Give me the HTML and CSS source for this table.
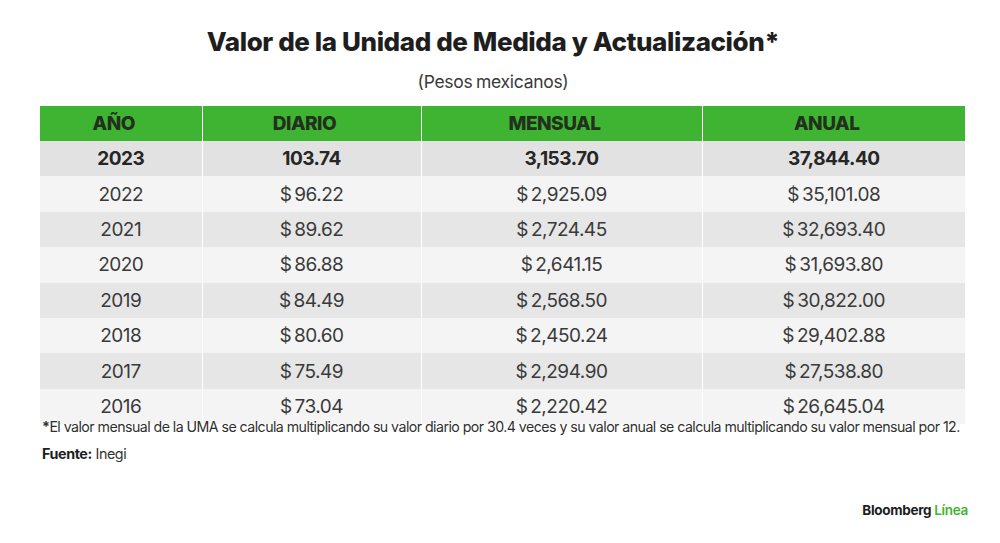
FILE: index.html
```html
<!DOCTYPE html>
<html lang="es">
<head>
<meta charset="utf-8">
<title>UMA</title>
<link rel="stylesheet" href="styles.css">
</head>
<body>
<div class="page">
  <h1 class="title">Valor de la Unidad de Medida y Actualización*</h1>
  <p class="subtitle">(Pesos mexicanos)</p>
  <table class="uma">
    <colgroup>
      <col class="c1"><col class="c2"><col class="c3"><col class="c4">
    </colgroup>
    <thead>
      <tr><th>AÑO</th><th>DIARIO</th><th>MENSUAL</th><th>ANUAL</th></tr>
    </thead>
    <tbody>
      <tr class="cur"><td>2023</td><td>103.74</td><td>3,153.70</td><td>37,844.40</td></tr>
      <tr><td>2022</td><td>$&#8201;96.22</td><td>$&#8201;2,925.09</td><td>$&#8201;35,101.08</td></tr>
      <tr><td>2021</td><td>$&#8201;89.62</td><td>$&#8201;2,724.45</td><td>$&#8201;32,693.40</td></tr>
      <tr><td>2020</td><td>$&#8201;86.88</td><td>$&#8201;2,641.15</td><td>$&#8201;31,693.80</td></tr>
      <tr><td>2019</td><td>$&#8201;84.49</td><td>$&#8201;2,568.50</td><td>$&#8201;30,822.00</td></tr>
      <tr><td>2018</td><td>$&#8201;80.60</td><td>$&#8201;2,450.24</td><td>$&#8201;29,402.88</td></tr>
      <tr><td>2017</td><td>$&#8201;75.49</td><td>$&#8201;2,294.90</td><td>$&#8201;27,538.80</td></tr>
      <tr><td>2016</td><td>$&#8201;73.04</td><td>$&#8201;2,220.42</td><td>$&#8201;26,645.04</td></tr>
    </tbody>
  </table>
  <p class="note"><b>*</b>El valor mensual de la UMA se calcula multiplicando su valor diario por 30.4 veces y su valor anual se calcula multiplicando su valor mensual por 12.</p>
  <p class="source"><b>Fuente:</b> Inegi</p>
  <div class="brand">Bloomberg <span class="linea">Línea</span></div>
</div>
</body>
</html>
```

FILE: styles.css
```css
* { box-sizing: border-box; }
html, body { margin: 0; padding: 0; background: #fff; }
body { font-family: "Inter", "Liberation Sans", Arial, sans-serif; color: #2b2b2b; }
.page { width: 1000px; height: 543px; padding: 26px 32px 0 40px; display: flex; flex-direction: column; overflow: hidden; }
.title { margin: 0; width: 925px; text-align: center; font-size: 26px; font-weight: 800; letter-spacing: -0.4px; line-height: 32px; color: #1e1e1e; padding-right: 19px; }
.subtitle { margin: 13px 0 0; width: 925px; text-align: center; font-size: 17.5px; line-height: 22px; color: #3a3a3a; letter-spacing: -0.3px; word-spacing: -1px; padding-right: 19px; }
.uma { margin-top: 13px; width: 925px; border-collapse: collapse; table-layout: fixed; }
.c1 { width: 162px; } .c2 { width: 219px; } .c3 { width: 281px; } .c4 { width: 263px; }
.uma th, .uma td { text-align: center; padding: 0; border-left: 1px solid #fff; }
.uma th:first-child, .uma td:first-child { border-left: none; }
.uma th { background: #3fb432; height: 35px; font-size: 19px; font-weight: 800; color: #22301e; letter-spacing: -0.5px; padding-right: 14px; }
.uma td { height: 35.4px; font-size: 19px; color: #3a3a3a; letter-spacing: -0.5px; }
.uma tbody tr:nth-child(odd) td { background: #e6e6e6; }
.uma tbody tr:nth-child(even) td { background: #f4f4f4; }
.uma tbody tr.cur td { background: #e2e2e2; font-weight: 700; color: #262626; }
.note { margin: -6px 0 0 2px; font-size: 14.2px; line-height: 18px; letter-spacing: -0.55px; color: #2f2f2f; white-space: nowrap; position: relative; }
.note b { font-weight: 700; }
.source { margin: 9px 0 0 2px; font-size: 14.3px; line-height: 18px; letter-spacing: -0.4px; color: #333; }
.source b { font-weight: 700; color: #1e1e1e; }
.brand { margin-top: 39px; align-self: flex-end; font-size: 13.5px; font-weight: 700; letter-spacing: -0.3px; color: #1e1e1e; }
.linea { color: #3fb432; font-weight: 600; }
```
